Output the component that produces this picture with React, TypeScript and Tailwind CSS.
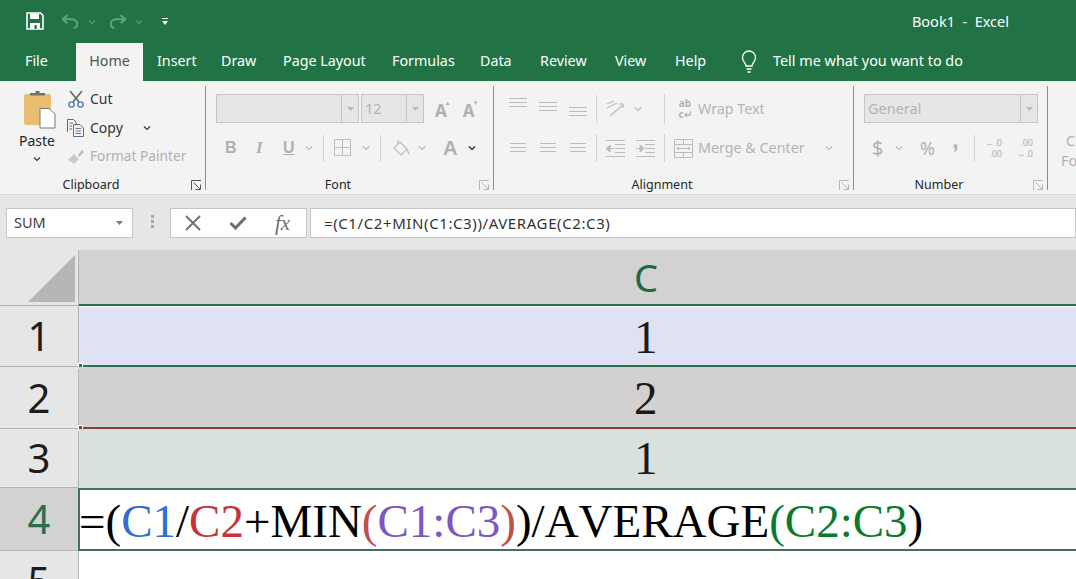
import React from "react";

const ui = "font-['Noto_Sans','Open_Sans',sans-serif]";

function Chev({ c = "#8f8f8f", w = 8 }: { c?: string; w?: number }) {
  return (
    <svg width={w} height={6} viewBox="0 0 8 6" className="shrink-0">
      <path d="M1 1.5 L4 4.5 L7 1.5" fill="none" stroke={c} strokeWidth={1.2} />
    </svg>
  );
}
function Launcher({ c = "#b5b5b5" }: { c?: string }) {
  return (
    <svg width={11} height={11} viewBox="0 0 11 11">
      <path d="M.5 10V.5H10M2.5 2.5 9 9M4.5 9.5H9.5V4.5" fill="none" stroke={c} strokeWidth={1} />
    </svg>
  );
}
function VSep({ h = 27 }: { h?: number }) {
  return <div className="w-px bg-[#d2d2d2] shrink-0" style={{ height: h }} />;
}
function Combo({ w, text, arrow = 17 }: { w: number; text?: string; arrow?: number }) {
  return (
    <div className="h-[29px] flex border border-[#c6c6c6] bg-[#e6e6e6] shrink-0" style={{ width: w }}>
      <div className="flex-1 pl-[3px] text-[14.5px] leading-[27px] text-[#b4b4b4]">{text}</div>
      <div className="border-l border-[#c6c6c6] flex items-center justify-center" style={{ width: arrow }}>
        <svg width={7} height={4} viewBox="0 0 7 4"><path d="M0 0H7L3.5 4Z" fill="#b8b8b8" /></svg>
      </div>
    </div>
  );
}
function Group({ w, label, children, launcher = "#b5b5b5" }: { w: number; label: string; children: React.ReactNode; launcher?: string }) {
  return (
    <div className="shrink-0 flex flex-col h-[104px] border-r border-[#8e8e8e]" style={{ width: w }}>
      <div className="flex-1 pt-[8px]">{children}</div>
      <div className="grid grid-cols-[1fr_auto_1fr] items-center h-[16px] mb-[-2px] text-[12.5px] text-[#262626] pr-[3px]">
        <span />
        <span className="whitespace-nowrap mr-[20px]">{label}</span>
        <span className="justify-self-end flex"><Launcher c={launcher} /></span>
      </div>
    </div>
  );
}
function Lines({ w = 16 }: { w?: number }) {
  return (
    <svg width={w} height={12} viewBox={`0 0 ${w} 12`} className="shrink-0">
      {[0, 1, 2].map((i) => (
        <rect key={i} x={0} y={i * 4 + 1} width={w} height={1} fill="#bcbcbc" />
      ))}
    </svg>
  );
}

function Tabs() {
  return (
    <div className="h-[38px] bg-[#217346] flex items-end text-[14.3px] text-white">
      <div className="w-[76px] h-[38px] pl-[25px] leading-[36px]">File</div>
      <div className="w-[67px] h-[38px] bg-[#f3f3f3] text-[#45574d] text-center leading-[36px]">Home</div>
      <div className="w-[64px] h-[38px] pl-[14px] leading-[36px]">Insert</div>
      <div className="w-[62px] h-[38px] pl-[14px] leading-[36px]">Draw</div>
      <div className="w-[109px] h-[38px] pl-[14px] leading-[36px] whitespace-nowrap">Page Layout</div>
      <div className="w-[88px] h-[38px] pl-[14px] leading-[36px]">Formulas</div>
      <div className="w-[60px] h-[38px] pl-[14px] leading-[36px]">Data</div>
      <div className="w-[75px] h-[38px] pl-[14px] leading-[36px]">Review</div>
      <div className="w-[60px] h-[38px] pl-[14px] leading-[36px]">View</div>
      <div className="w-[79px] h-[38px] pl-[14px] leading-[36px]">Help</div>
      <div className="h-[38px] flex items-center">
        <svg width={18} height={24} viewBox="0 0 18 24" fill="none" stroke="#fff" strokeWidth={1.3} className="mb-[1px]">
          <path d="M6 16c0-3-3.5-4-3.5-8.5a6.5 6.500 0 0 1 13 0C15.500 12 12 13 12 16Z" />
          <path d="M6.500 19h5M7.500 22h3" />
        </svg>
        <span className="ml-[15px] whitespace-nowrap text-[14.4px] mb-[2px]">Tell me what you want to do</span>
      </div>
    </div>
  );
}

function TitleBar() {
  return (
    <div className="h-[43px] bg-[#217346] flex items-center pl-[26px]">
      <svg width={18} height={18} viewBox="0 0 18 18" className="mb-[2px]">
        <path d="M1 1H14.500L17 3.500V17H1Z" fill="none" stroke="#fff" strokeWidth={1.600} />
        <path d="M4 1.500H13V7H4ZM4 11H14V17H4Z" fill="#fff" />
        <rect x="8.500" y="13" width="2.200" height="4" fill="#217346" />
      </svg>
      <svg width={18} height={15} viewBox="0 0 20 16" fill="none" stroke="#5aa67f" strokeWidth={2.2} className="ml-[17px] mb-[1px]">
        <path d="M7 1 2 5.500 7 10M2 5.500H12C16 5.500 18 8 18 10.500C18 13 16.500 15 14 15" />
      </svg>
      <span className="ml-[9px]"><Chev c="#4f9c74" /></span>
      <svg width={18} height={15} viewBox="0 0 20 16" fill="none" stroke="#5aa67f" strokeWidth={2.2} className="ml-[13px] mb-[1px]">
        <path d="M13 1 18 5.500 13 10M18 5.500H8C4 5.500 2 8 2 10.500C2 13 3.500 15 6 15" />
      </svg>
      <span className="ml-[8px]"><Chev c="#4f9c74" /></span>
      <svg width={6} height={8} viewBox="0 0 6 8" className="ml-[19px] mt-[1px]">
        <rect x="0" y="0" width="6" height="1" fill="#fff" />
        <path d="M0 3H6L3 7Z" fill="#fff" />
      </svg>
      <div className="ml-auto mr-[67px] text-[14.5px] text-white whitespace-nowrap">Book1&nbsp; -&nbsp; Excel</div>
    </div>
  );
}

function Clipboard() {
  return (
    <Group w={206} label="Clipboard" launcher="#555">
      <div className="flex h-[74px] mt-[-4px] pl-[18px]">
        <div className="w-[38px] flex flex-col items-center">
          <svg width={36} height={39} viewBox="0 0 36 39" className="ml-[2px] shrink-0">
            <rect x="4" y="4" width="27" height="31" rx="2" fill="#e9bd72" />
            <path d="M10 5V3H15.500V1H19.500V3H25V5.500H10Z" fill="#707070" />
            <path d="M20 18.500H29L35 24V38H20Z" fill="#fff" stroke="#7a7a7a" />
          </svg>
          <span className="text-[14px] leading-[18px] mt-[3px] text-[#262626] shrink-0">Paste</span>
          <span className="mt-[6px] shrink-0 flex"><Chev c="#333" /></span>
        </div>
        <div className="ml-[11px] flex flex-col mt-[-6px]">
          <div className="flex items-center h-[29px] shrink-0">
            <svg width={18} height={18} viewBox="0 0 18 18" fill="none" className="shrink-0">
              <path d="M3 1 12 12M15 1 6 12" stroke="#666" strokeWidth={1.600} />
              <circle cx="4.500" cy="14.500" r="2.600" stroke="#4a78b8" strokeWidth={1.400} />
              <circle cx="13.500" cy="14.500" r="2.600" stroke="#4a78b8" strokeWidth={1.400} />
            </svg>
            <span className="ml-[5px] text-[14px] text-[#333]">Cut</span>
          </div>
          <div className="flex items-center h-[29px] shrink-0">
            <svg width={18} height={18} viewBox="0 0 18 18" fill="none" stroke="#666" className="shrink-0">
              <path d="M.5 13V.5H6.500L9 3V5M2.500 4H6M2.500 7H5M2.500 10H5" />
              <path d="M6.500 5.500H13L16.500 9V17.500H6.500Z" fill="#f3f3f3" stroke="#5f6f88" />
              <path d="M8.500 9.500H14M8.500 12H14M8.500 14.500H14" stroke="#6b7c96" />
            </svg>
            <span className="ml-[5px] text-[14px] text-[#333]">Copy</span>
            <span className="ml-[20px]"><Chev c="#333" /></span>
          </div>
          <div className="flex items-center h-[29px] shrink-0">
            <svg width={18} height={16} viewBox="0 0 18 16" className="shrink-0">
              <path d="M11 6 15 1 17 3 12 8Z" fill="#bdbdbd" />
              <path d="M1 11 7 5 12 10 7 15C5 13 3 12 1 11Z" fill="#c9c9c9" />
            </svg>
            <span className="ml-[5px] text-[13.7px] text-[#b0b0b0] whitespace-nowrap">Format Painter</span>
          </div>
        </div>
      </div>
    </Group>
  );
}

function FontG() {
  return (
    <Group w={288} label="Font">
      <div className="pl-[10px]">
        <div className="flex items-center h-[29px]">
          <Combo w={143} />
          <div className="ml-[2px]"><Combo w={63} text="12" /></div>
          <span className="ml-[11px] mt-[3px] font-bold text-[17px] leading-none text-[#b0b0b0] relative">A<span className="absolute right-[-4px] top-[-2px] text-[6px]">▲</span></span>
          <span className="ml-[16px] mt-[3px] font-bold text-[17px] leading-none text-[#b0b0b0] relative">A<span className="absolute right-[-4px] top-[-2px] text-[6px]">▼</span></span>
        </div>
        <div className="flex items-center h-[30px] mt-[10px] text-[#b0b0b0]">
          <span className="w-[11px] ml-[9px] text-[16px] font-bold font-['Liberation_Sans',sans-serif]">B</span>
          <span className="w-[12px] ml-[20px] text-[17px] font-bold italic font-['Liberation_Serif',serif]">I</span>
          <span className="w-[12px] ml-[15px] text-[16px] font-bold underline font-['Liberation_Sans',sans-serif]">U</span>
          <span className="ml-[10px]"><Chev c="#b8b8b8" /></span>
          <span className="ml-[10px]"><VSep /></span>
          <svg width={18} height={18} viewBox="0 0 18 18" fill="none" stroke="#bdbdbd" className="ml-[10px] shrink-0">
            <path d="M.5.5H16.500V16.500H.5ZM8.500.5V16.500M.5 8.500H16.500" />
          </svg>
          <span className="ml-[10px]"><Chev c="#b8b8b8" /></span>
          <span className="ml-[10px]"><VSep /></span>
          <svg width={18} height={18} viewBox="0 0 18 18" fill="none" stroke="#bdbdbd" strokeWidth={1.200} className="ml-[11px] shrink-0">
            <path d="M8 3 15 10 9 16 2 9ZM6 1V6M15 10 17 15" />
          </svg>
          <span className="ml-[8px]"><Chev c="#b8b8b8" /></span>
          <span className="ml-[17px] text-[20px] font-bold leading-none font-['Liberation_Sans',sans-serif]">A</span>
          <span className="ml-[11px]"><Chev c="#222" /></span>
        </div>
      </div>
    </Group>
  );
}

function Indent({ flip }: { flip?: boolean }) {
  return (
    <svg width={19} height={17} viewBox="0 0 19 17" className="shrink-0">
      <path d="M0 .5H19M9 4.500H19M9 8.500H19M9 12.500H19M0 16.500H19" stroke="#bcbcbc" />
      <path d={flip ? "M0 8.500H4M4 5 8 8.500 4 12Z" : "M8 8.500H4M4 5 0 8.500 4 12Z"} stroke="#bcbcbc" fill="#bcbcbc" />
    </svg>
  );
}

function Alignment() {
  return (
    <Group w={360} label="Alignment">
      <div className="pl-[15px]">
        <div className="flex items-center h-[29px]">
          <div className="flex gap-[12px] w-[80px] shrink-0 self-start mt-[3px]">
            <Lines w={18} />
            <div className="mt-[4px]"><Lines w={18} /></div>
            <div className="mt-[9px]"><Lines w={18} /></div>
          </div>
          <span className="ml-[7px]"><VSep h={28} /></span>
          <svg width={20} height={20} viewBox="0 0 20 20" fill="none" stroke="#bcbcbc" strokeWidth={1.200} className="ml-[8px] shrink-0">
            <path d="M2 5 9 2M2 9 12 4M5 17 18 6M14 5H18V9" />
          </svg>
          <span className="ml-[9px]"><Chev c="#b8b8b8" /></span>
          <span className="ml-[22px]"><VSep h={30} /></span>
          <div className="ml-[11px] w-[18px] flex flex-col items-center text-[10px] leading-[11px] font-bold text-[#b4b4b4] whitespace-nowrap">
            <span>ab</span>
            <span>c↵</span>
          </div>
          <span className="ml-[4px] text-[14.3px] text-[#b4b4b4] whitespace-nowrap">Wrap Text</span>
        </div>
        <div className="flex items-center h-[30px] mt-[10px]">
          <div className="flex gap-[14px] w-[80px] shrink-0 pl-[1px]">
            <Lines w={16} />
            <Lines w={16} />
            <Lines w={16} />
          </div>
          <span className="ml-[7px]"><VSep h={28} /></span>
          <span className="ml-[9px]"><Indent /></span>
          <span className="ml-[11px]"><Indent flip /></span>
          <span className="ml-[9px]"><VSep h={28} /></span>
          <svg width={19} height={19} viewBox="0 0 19 19" fill="none" stroke="#bcbcbc" className="ml-[9px] shrink-0">
            <path d="M.5.5H18.500V18.500H.5ZM.5 5.500H18.500M.5 13.500H18.500M9.500.5V5.500M9.500 13.500V18.500M3 9.500H16M5 7.500 3 9.500 5 11.500M14 7.500 16 9.500 14 11.500" />
          </svg>
          <span className="ml-[5px] text-[14.3px] text-[#b4b4b4] whitespace-nowrap">Merge &amp; Center</span>
          <span className="ml-[20px]"><Chev c="#b8b8b8" /></span>
        </div>
      </div>
    </Group>
  );
}

function NumberG() {
  return (
    <Group w={194} label="Number">
      <div className="pl-[10px]">
        <Combo w={174} text="General" />
        <div className="flex items-center h-[30px] mt-[10px] text-[#b0b0b0]">
          <span className="ml-[8px] text-[20px] leading-none w-[14px]">$</span>
          <span className="ml-[9px]"><Chev c="#b8b8b8" /></span>
          <span className="ml-[17px] text-[18px] leading-none">%</span>
          <span className="ml-[17px] text-[24px] font-bold leading-none w-[6px] mb-[16px] font-['Liberation_Sans',sans-serif]">,</span>
          <span className="ml-[16px]"><VSep /></span>
          <div className="ml-[9px] w-[18px] flex flex-col items-end text-[9px] leading-[11px] whitespace-nowrap">
            <span>←.0</span>
            <span>.00</span>
          </div>
          <div className="ml-[13px] w-[18px] flex flex-col items-end text-[9px] leading-[11px] whitespace-nowrap">
            <span>.00</span>
            <span>→.0</span>
          </div>
        </div>
      </div>
    </Group>
  );
}

function Ribbon() {
  return (
    <div className="h-[114px] bg-[#f3f3f3] flex pt-[5px] overflow-hidden border-b border-[#d9d9d9]">
      <Clipboard />
      <FontG />
      <Alignment />
      <NumberG />
      <div className="pl-[13px] pt-[44px] text-[14.5px] leading-[20px] text-[#b0b0b0] whitespace-nowrap">
        <div className="pl-[5px]">C</div>
        <div>Fo</div>
      </div>
    </div>
  );
}

function FormulaBar() {
  return (
    <div className="h-[55px] bg-[#e6e6e6] flex items-start pt-[13px]">
      <div className="ml-[6px] w-[127px] h-[30px] bg-white border border-[#c6c6c6] flex items-center pl-[7px] pr-[9px] text-[14.5px] text-[#3f3f3f]">
        <span>SUM</span>
        <svg width={7} height={4} viewBox="0 0 7 4" className="ml-auto"><path d="M0 0H7L3.500 4Z" fill="#7a7a7a" /></svg>
      </div>
      <div className="ml-[18px] mt-[7px] flex flex-col gap-[2px]">
        <div className="w-[3px] h-[3px] bg-[#a8a8a8]" />
        <div className="w-[3px] h-[3px] bg-[#a8a8a8]" />
        <div className="w-[3px] h-[3px] bg-[#a8a8a8]" />
      </div>
      <div className="ml-[16px] w-[137px] h-[30px] bg-white border border-[#c6c6c6] flex items-center shrink-0">
        <svg width={16} height={16} viewBox="0 0 16 16" className="ml-[14px]"><path d="M1 1 15 15M15 1 1 15" stroke="#6e6e6e" strokeWidth={1.800} /></svg>
        <svg width={18} height={14} viewBox="0 0 18 14" className="ml-[28px]"><path d="M1.500 7 6.500 12 16.500 1.500" fill="none" stroke="#6e6e6e" strokeWidth={3} /></svg>
        <span className="ml-[28px] text-[21px] italic leading-none text-[#6e6e6e] font-['Liberation_Serif',serif]">fx</span>
      </div>
      <div className="ml-[3px] flex-1 h-[30px] bg-white border border-[#c6c6c6] pl-[13px] text-[15px] tracking-[0.6px] leading-[28px] text-[#333] whitespace-nowrap">
        =(C1/C2+MIN(C1:C3))/AVERAGE(C2:C3)
      </div>
    </div>
  );
}

function Row({ n, h, bg, border, handle, children, top }: { n: string; h: number; bg: string; border: string; handle?: string; children?: React.ReactNode; top?: boolean }) {
  return (
    <div className="flex" style={{ height: h }}>
      <div className="w-[79px] shrink-0 border-r border-b border-[#b4b4b4] flex items-center justify-center text-[40px] leading-none bg-[#e6e6e6] text-[#1c1c1c]">
        <span>{n}</span>
      </div>
      <div className={"relative flex-1 min-w-0 border-b-2 " + (top ? "border-t border-t-white" : "")} style={{ background: bg, borderBottomColor: border }}>
        {children}
        {handle && <span className="absolute left-[-1px] bottom-[-4px] w-[5px] h-[6px] border border-white" style={{ background: handle }} />}
      </div>
    </div>
  );
}

const cellNum = "h-full flex items-center pl-[555px] pt-[2px] text-[47px] [font-kerning:none] leading-none text-[#1a1a1a] font-['Liberation_Serif',serif]";

export default function App() {
  return (
    <div className={"w-[1076px] h-[579px] overflow-hidden bg-white " + ui}>
      <TitleBar />
      <Tabs />
      <Ribbon />
      <FormulaBar />
      <div className="flex h-[56px]">
        <div className="w-[79px] shrink-0 bg-[#e6e6e6] border-r border-b border-[#b4b4b4] flex justify-end items-end pr-[3px] pb-[3px]">
          <div className="w-[47px] h-[47px] bg-[#b6b6b6] [clip-path:polygon(100%_0,100%_100%,0_100%)]" />
        </div>
        <div className="flex-1 bg-[#d2d2d2] border-b-2 border-[#217346] flex items-center pl-[555px] text-[38px] leading-none text-[#1e6a45]">C</div>
      </div>
      <Row n="1" h={61} bg="#dfe1f4" border="#2c7350" handle="#2c7350" top><div className={cellNum}>1</div></Row>
      <Row n="2" h={62} bg="#d2d0d0" border="#8b3b3f" handle="#8b3b3f"><div className={cellNum}>2</div></Row>
      <Row n="3" h={59} bg="#d9e1df" border="transparent"><div className={cellNum}>1</div></Row>
      <div className="flex h-[63px]">
        <div className="w-[78px] shrink-0 bg-[#d2d2d2] border-b border-[#b4b4b4] flex items-center justify-center text-[40px] leading-none text-[#2c6e4c]"><span>4</span></div>
        <div className="flex-1 border-2 border-r-0 border-[#44705c] bg-white whitespace-nowrap font-['Liberation_Serif',serif] text-[47px] [font-kerning:none] leading-[59px] pt-[2px] text-black">
          <span className="ml-[-1px]">=(</span><span className="text-[#2f6fd0]">C1</span>/<span className="text-[#c8323c]">C2</span>+MIN<span className="text-[#c0504d]">(</span><span className="text-[#7e57c2]">C1:C3</span><span className="text-[#c0504d]">)</span>)/AVERAGE<span className="text-[#0b7a2a]">(C2:C3</span>)
        </div>
      </div>
      <div className="flex h-[40px]">
        <div className="w-[79px] shrink-0 bg-[#e6e6e6] border-r border-[#b4b4b4] flex justify-center text-[40px] leading-none text-[#1c1c1c] pt-[10px]"><span>5</span></div>
        <div className="flex-1 bg-white" />
      </div>
    </div>
  );
}
